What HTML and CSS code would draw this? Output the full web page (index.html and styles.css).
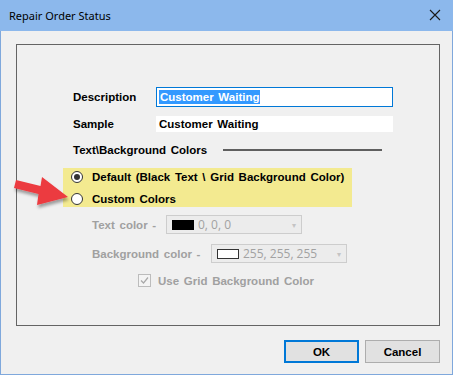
FILE: index.html
```html
<!DOCTYPE html>
<html lang="en">

<head>
    <meta charset="UTF-8" />
    <meta name="viewport" content="width=device-width, initial-scale=1.0" />
    <title>Repair Order Status</title>
    <link rel="stylesheet" href="styles.css">
</head>

<body>
    <div class="ventana">
        <div class="titulo">
            <span>Repair Order Status</span>
            <svg class="cerrar" width="12" height="12" viewBox="0 0 12 12">
                <path d="M1 1 L11 11 M11 1 L1 11" stroke="#1a1a1a" stroke-width="1.1" fill="none" />
            </svg>
        </div>
        <div class="cliente">
            <div class="grupo">
                <div class="fila">
                    <label>Description</label>
                    <div class="caja foco"><span class="sel">Customer Waiting</span></div>
                </div>
                <div class="fila muestra">
                    <label>Sample</label>
                    <div class="caja blanca">Customer Waiting</div>
                </div>
                <div class="cabecera">
                    <span>Text\Background Colors</span>
                    <div class="linea"></div>
                </div>
                <div class="amarillo">
                    <div class="radio">
                        <span class="punto activo"></span>
                        <span>Default (Black Text \ Grid Background Color)</span>
                    </div>
                    <div class="radio">
                        <span class="punto"></span>
                        <span>Custom Colors</span>
                    </div>
                </div>
                <div class="color uno">
                    <label class="gris ancho1">Text color -</label>
                    <div class="combo">
                        <span class="muestra-color negro"></span>
                        <span class="valor">0, 0, 0</span>
                        <span class="flecha">&#9662;</span>
                    </div>
                </div>
                <div class="color dos">
                    <label class="gris ancho2">Background color -</label>
                    <div class="combo">
                        <span class="muestra-color blanco"></span>
                        <span class="valor">255, 255, 255</span>
                        <span class="flecha">&#9662;</span>
                    </div>
                </div>
                <div class="check">
                    <svg class="casilla" width="13" height="13" viewBox="0 0 13 13">
                        <rect x="0.5" y="0.5" width="12" height="12" fill="#f4f4f4" stroke="#bcbcbc" />
                        <path d="M3 6.5 L5.5 9 L10 3.5" stroke="#a8a8a8" stroke-width="1.2" fill="none" />
                    </svg>
                    <span class="gris">Use Grid Background Color</span>
                </div>
            </div>
            <div class="botones">
                <button class="boton ok">OK</button>
                <button class="boton">Cancel</button>
            </div>
        </div>
        <!-- flecha roja de anotacion -->
        <svg class="anotacion" width="80" height="215" viewBox="0 0 80 215">
            <defs>
                <filter id="sombra" x="-20%" y="-20%" width="150%" height="150%">
                    <feDropShadow dx="1" dy="3" stdDeviation="1.5" flood-color="#000" flood-opacity="0.35" />
                </filter>
            </defs>
            <polygon points="16,180 40.5,186 42,177 68,197 37,205 38.5,194 14,188" fill="#ec3a3f" filter="url(#sombra)" />
        </svg>
    </div>
</body>

</html>
```

FILE: styles.css
```css
* {
    box-sizing: border-box;
    margin: 0;
    padding: 0;
}

body {
    width: 453px;
    height: 375px;
    overflow: hidden;
    font-family: "Liberation Sans", Arial, sans-serif;
    font-size: 11.5px;
    font-weight: bold;
    word-spacing: 1.5px;
}

.ventana {
    position: relative;
    width: 453px;
    height: 375px;
    background-color: #f0f0f0;
    border: 1px solid #7fa8dc;
    border-top: none;
}

.titulo {
    height: 31px;
    margin: 0 -1px;
    background-color: #8cb8ec;
    display: flex;
    align-items: center;
    justify-content: space-between;
    padding: 0 12px 1px 9px;
    font-family: "Noto Sans", sans-serif;
    font-size: 11px;
    font-weight: normal;
    word-spacing: 0;
    color: #000;
}

.cliente {
    padding: 13px 13px 0 15px;
}

.grupo {
    height: 282px;
    width: 424px;
    border: 1px solid #646464;
    padding: 42px 0 0 56px;
}

.fila {
    display: grid;
    grid-template-columns: 83px 237px;
    align-items: center;
    height: 20px;
}

.muestra {
    margin-top: 9px;
    height: 16px;
}

.caja {
    height: 100%;
    display: flex;
    align-items: center;
    padding-left: 3px;
}

.foco {
    background-color: #fff;
    border: 1px solid #0078d7;
    padding-left: 2px;
}

.sel {
    background-color: #3399ff;
    color: #fff;
    padding: 1px;
}

.blanca {
    background-color: #fff;
}

.cabecera {
    margin-top: 11px;
    height: 14px;
    display: flex;
    align-items: center;
}

.linea {
    margin-left: 16px;
    width: 159px;
    height: 2px;
    background-color: #5f5f5f;
}

.amarillo {
    margin-top: 11px;
    margin-left: -10px;
    width: 289px;
    height: 39px;
    background-color: #f3ea90;
    padding: 1px 0 0 8px;
    display: flex;
    flex-direction: column;
    gap: 6px;
}

.radio {
    height: 16px;
    display: flex;
    align-items: center;
    gap: 9px;
}

.punto {
    width: 12px;
    height: 12px;
    border-radius: 50%;
    border: 1px solid #333;
    background-color: #fff;
    display: flex;
    align-items: center;
    justify-content: center;
}

.punto.activo::after {
    content: "";
    width: 6px;
    height: 6px;
    border-radius: 50%;
    background-color: #333;
}

.gris {
    color: #a0a0a0;
}

.color {
    margin-left: 19px;
    display: flex;
    align-items: center;
    height: 19px;
}

.uno {
    margin-top: 8px;
}

.dos {
    margin-top: 10px;
}

.ancho1 {
    width: 74px;
}

.ancho2 {
    width: 119px;
}

.combo {
    width: 136px;
    height: 19px;
    border: 1px solid #cdcdcd;
    background-color: #ececec;
    display: flex;
    align-items: center;
    padding-left: 5px;
    font-family: "Open Sans", sans-serif;
    font-weight: normal;
    font-size: 12px;
    word-spacing: 0;
    color: #a2a2a2;
}

.muestra-color {
    width: 22px;
    height: 10px;
    margin-right: 4px;
}

.negro {
    background-color: #000;
}

.blanco {
    background-color: #fff;
    border: 1px solid #333;
}

.valor {
    flex-grow: 1;
}

.flecha {
    font-size: 8px;
    color: #c4c4c4;
    margin-right: 5px;
}

.check {
    margin-top: 11px;
    margin-left: 65px;
    display: flex;
    align-items: center;
    gap: 7px;
    height: 13px;
}

.botones {
    margin-top: 14px;
    display: flex;
    justify-content: flex-end;
    gap: 6px;
    width: 424px;
}

.boton {
    width: 75px;
    height: 23px;
    background-color: #e1e1e1;
    border: 1px solid #adadad;
    font-family: "Liberation Sans", Arial, sans-serif;
    font-size: 11.5px;
    font-weight: bold;
    color: #000;
}

.ok {
    border: 2px solid #0078d7;
}

.anotacion {
    position: absolute;
    left: -1px;
    top: 0;
}
```
